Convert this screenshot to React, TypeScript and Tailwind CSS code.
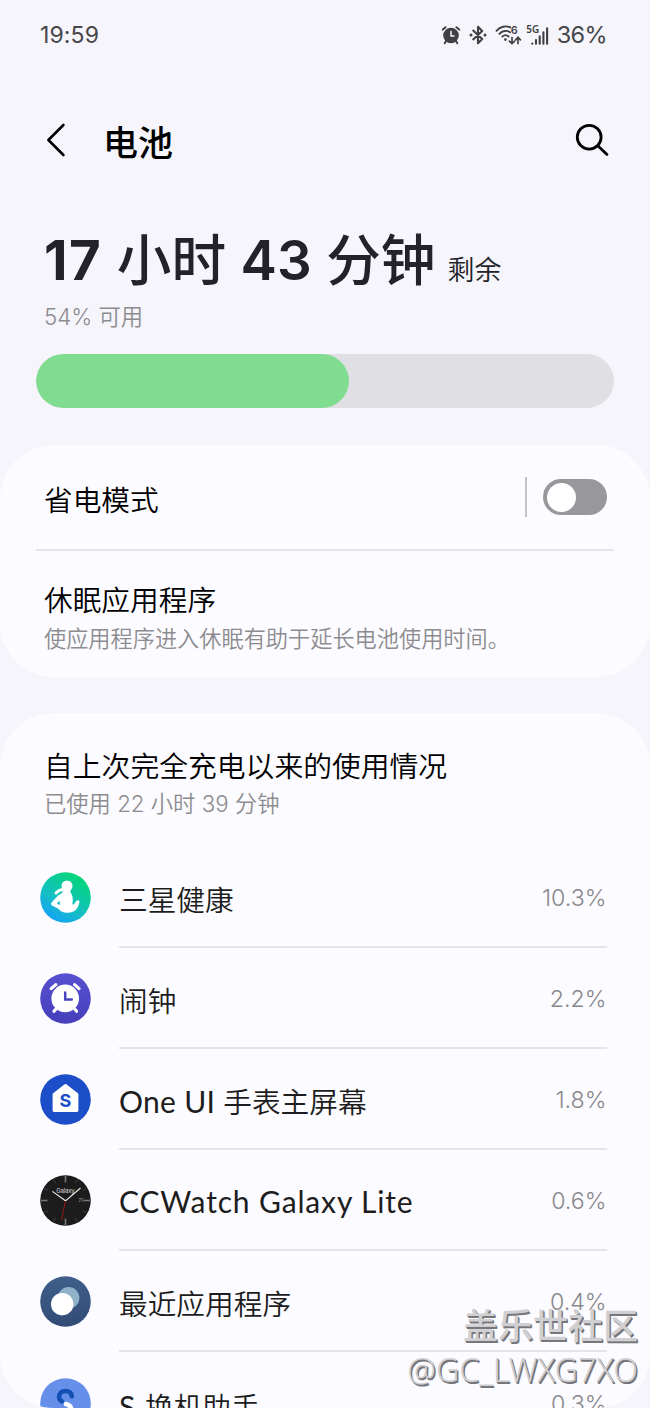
import type { ReactNode } from "react"
import { clsx } from "clsx"

interface AppUsage {
	// Latin part of the name, set slightly larger than the CJK part
	latin?: string
	latinClass?: string
	name?: string
	percent: string
	icon: ReactNode
}

function AlarmStatusIcon(): ReactNode {
	return (
		<svg width="20" height="20" viewBox="0 0 20 20" fill="none" stroke="#414144" strokeLinecap="round">
			<circle cx="10" cy="10.5" r="7.8" fill="#414144" stroke="none" />
			<path d="M1.8 4.6 4.6 2.2M18.2 4.6 15.4 2.2" strokeWidth="2" />
			<path d="M5.2 15.8 3.7 18.2M14.8 15.8 16.3 18.2" strokeWidth="2" />
			<path d="M10 6.6V11H13" stroke="#f6f5fb" strokeWidth="1.5" />
		</svg>
	)
}

function BluetoothIcon(): ReactNode {
	return (
		<svg width="18" height="20" viewBox="0 0 18 20" fill="none" stroke="#414144" strokeWidth="2.1" strokeLinejoin="round" strokeLinecap="round">
			<path d="M4.2 5.6 13.2 14 9 18.2V1.8L13.2 6 4.2 14.4" />
			<circle cx="2" cy="10" r="1.5" fill="#414144" stroke="none" />
			<circle cx="16" cy="10" r="1.5" fill="#414144" stroke="none" />
		</svg>
	)
}

function WifiIcon(): ReactNode {
	return (
		<svg width="27" height="22" viewBox="0 0 27 22" fill="none" stroke="#414144" strokeWidth="1.9" strokeLinecap="round">
			<path d="M1.5 6.8C5.2 2.4 11 1.4 15.2 3.4" />
			<path d="M4.4 9.8C7.3 6.6 11.8 6 15 8.2" />
			<path d="M7.3 12.6C9.2 10.9 11.8 10.9 13.6 12.4" />
			<circle cx="10.4" cy="15.6" r="1.4" fill="#414144" stroke="none" />
			<path d="M17 13.5V19.2M14.4 17.2 17 19.6 19.6 17.2M23 19.5V13.5M20.6 15.8 23 13.2 25.4 15.8" strokeWidth="1.7" />
			<text x="15.8" y="9.6" fill="#414144" stroke="none" fontFamily="Inter, sans-serif" fontWeight="600" fontSize="11">6</text>
		</svg>
	)
}

function SignalIcon(): ReactNode {
	return (
		<svg className="overflow-visible" width="25" height="22" viewBox="0 0 25 22" fill="none" stroke="#414144" strokeWidth="2.1" strokeLinecap="round">
			<text x="0.2" y="8.8" fill="#414144" stroke="none" fontFamily="'Noto Sans', sans-serif" fontWeight="600" fontSize="10">5G</text>
			<path d="M6.3 19.7V19.6M10 19.7V16M13.7 19.7V12.2M17.4 19.7V8.2M21.1 19.7V4.2" />
		</svg>
	)
}

function HealthIcon(): ReactNode {
	return (
		<svg width="51" height="51" viewBox="0 0 51 51">
			<defs>
				<linearGradient id="health" x1="0.15" y1="1" x2="0.7" y2="0.1">
					<stop offset="0" stopColor="#169bff" />
					<stop offset="0.45" stopColor="#14bfc6" />
					<stop offset="1" stopColor="#05d47e" />
				</linearGradient>
			</defs>
			<circle cx="25.5" cy="25.5" r="25.3" fill="url(#health)" />
			<circle cx="27" cy="14" r="5.5" fill="#fff" />
			<path d="M22.4 17.6Q18.6 18 16 21" stroke="#fff" strokeWidth="3" strokeLinecap="round" fill="none" />
			<path
				fill="#fff"
				fillRule="evenodd"
				d="M23.4 17.5 30.4 17.5C30 20 31 21 31.8 22.6 33 25 33 28 32.4 32.6 34 32.6 34.8 31.4 36 29.2 37 27.6 40 28.2 39.4 30.4 37.6 37.4 34.4 40.4 28 40.8 23.6 41 20.6 40 18.4 36.8L12 33.4C10.8 32.6 10.8 31.4 11.6 30.4L17.6 24C20 22 23 21.6 23.4 17.5ZM19.2 29 17 31.2 19.6 33.2C20.2 31.6 20 30.2 19.2 29Z"
			/>
		</svg>
	)
}

function ClockIcon(): ReactNode {
	return (
		<svg width="51" height="51" viewBox="0 0 51 51" fill="none" strokeLinecap="round">
			<defs>
				<linearGradient id="clock" x1="0" y1="0" x2="0" y2="1">
					<stop offset="0" stopColor="#5751d0" />
					<stop offset="1" stopColor="#453fbc" />
				</linearGradient>
			</defs>
			<circle cx="25.5" cy="25.5" r="25.3" fill="url(#clock)" />
			<path d="M11.2 15.6 15.8 11.6M39 15.6 34.6 11.6M16 36 14 38.2M34.6 36 36.6 38.2" stroke="#fff" strokeWidth="3.2" />
			<circle cx="25.2" cy="25.4" r="13.8" fill="#fff" />
			<path d="M25.2 19.4V26.4H31.8" stroke="#4b45c3" strokeWidth="2.5" />
		</svg>
	)
}

function HomeIcon(): ReactNode {
	return (
		<svg width="51" height="51" viewBox="0 0 51 51">
			<circle cx="25.5" cy="25.5" r="25.3" fill="#1c4ec9" />
			<path d="M25.5 11.4 37 20.4V36.6H14V20.4Z" fill="#fff" stroke="#fff" strokeWidth="2.8" strokeLinejoin="round" />
			<text x="25.3" y="33.2" textAnchor="middle" fill="#1c4ec9" fontFamily="Inter, sans-serif" fontWeight="700" fontSize="18">S</text>
		</svg>
	)
}

function WatchIcon(): ReactNode {
	return (
		<svg width="51" height="51" viewBox="0 0 51 51" fill="none">
			<circle cx="25.5" cy="25.5" r="25.3" fill="#1c1c1d" />
			<path d="M25.5 1V7.5M25.5 43.5V50M1 25.5H7.5M43.5 25.5H50" stroke="#77777a" strokeWidth="1.6" />
			<path d="M13.3 4.4 15.5 8.2M37.7 4.4 35.5 8.2M4.4 13.3 8.2 15.5M46.6 13.3 42.8 15.5M4.4 37.7 8.2 35.5M46.6 37.7 42.8 35.5M13.3 46.6 15.5 42.8M37.7 46.6 35.5 42.8" stroke="#4a4a4d" strokeWidth="0.8" />
			<text x="25.4" y="18.4" textAnchor="middle" fill="#d8d8d8" fontFamily="Inter, sans-serif" fontSize="6" textLength="18.5">Galaxy</text>
			<text x="38.6" y="27.4" fill="#a0a0a0" fontFamily="Inter, sans-serif" fontSize="4.5">21</text>
			<path d="M25.5 25.8 12.4 16.4M25.5 25.8 40.5 13" stroke="#f2f2f2" strokeWidth="1.1" />
			<path d="M25.5 26 21.5 45" stroke="#9c1717" strokeWidth="1" />
		</svg>
	)
}

function RecentsIcon(): ReactNode {
	return (
		<svg width="51" height="51" viewBox="0 0 51 51">
			<defs>
				<linearGradient id="recents" x1="0" y1="0" x2="0" y2="1">
					<stop offset="0" stopColor="#3f5f8a" />
					<stop offset="1" stopColor="#324b76" />
				</linearGradient>
			</defs>
			<circle cx="25.5" cy="25.5" r="25.3" fill="url(#recents)" />
			<circle cx="28.6" cy="21.8" r="10.8" fill="#8fb2c8" />
			<circle cx="22.2" cy="28.2" r="11.2" fill="#fff" />
		</svg>
	)
}

function SwitchIcon(): ReactNode {
	return (
		<svg width="51" height="51" viewBox="0 0 51 51" fill="none" strokeWidth="4.6" strokeLinecap="round">
			<circle cx="25.5" cy="25.5" r="25.3" fill="#658fe9" />
			<path d="M26 26C33 28 34 38 25.5 38.5 21 38.5 19 36.5 18 33" stroke="#fff" />
			<path d="M31.8 18.2C31.4 14.6 28.6 12.8 25.4 13 18.4 13.4 17.2 20.6 22 23.4" stroke="#1450b4" />
		</svg>
	)
}

const apps: AppUsage[] = [
	{ name: "三星健康", percent: "10.3%", icon: <HealthIcon /> },
	{ name: "闹钟", percent: "2.2%", icon: <ClockIcon /> },
	{ latin: "One UI ", latinClass: "tracking-[0.3px]", name: "手表主屏幕", percent: "1.8%", icon: <HomeIcon /> },
	{ latin: "CCWatch Galaxy Lite", latinClass: "tracking-[0.85px]", percent: "0.6%", icon: <WatchIcon /> },
	{ name: "最近应用程序", percent: "0.4%", icon: <RecentsIcon /> },
	{ latin: "S ", latinClass: "tracking-[1px]", name: "换机助手", percent: "0.3%", icon: <SwitchIcon /> },
]

function StatusBar(): ReactNode {
	return (
		<header className="flex h-[70px] items-center justify-between pr-[43px] pl-10 text-[#47474a]">
			<span className="font-[Inter,sans-serif] text-[23px] tracking-[0.1px]">19:59</span>
			<div className="flex items-center">
				<AlarmStatusIcon />
				<span className="ml-2 flex"><BluetoothIcon /></span>
				<span className="ml-2 flex"><WifiIcon /></span>
				<span className="ml-1 flex"><SignalIcon /></span>
				<span className="ml-1.5 font-[Inter,sans-serif] text-[23.5px] tracking-[-0.6px]">36%</span>
			</div>
		</header>
	)
}

function AppRow({ app, last }: { app: AppUsage, last: boolean }): ReactNode {
	return (
		<li className="flex h-[101.1px] shrink-0 pr-[43.5px] pl-[39.5px]">
			<div className="mr-[28.5px] flex w-[51px] items-center">{app.icon}</div>
			<div className={clsx("flex flex-1 items-center justify-between", !last && "border-b-2 border-[#e5e5e9]")}>
				<span className={clsx("text-[28.7px] leading-10 font-[350] whitespace-pre text-[#1d1d20]", app.name ? "pt-1.5" : "pt-1")}>
					{app.latin && <span className={clsx("text-[30px] font-normal", app.latinClass)}>{app.latin}</span>}
					{app.name}
				</span>
				<span className="pt-[3px] font-[Inter,sans-serif] text-[23.2px] font-[350] text-[#88888c]">{app.percent}</span>
			</div>
		</li>
	)
}

export default function App(): ReactNode {
	return (
		<main className="relative flex h-[1408px] w-[650px] flex-col overflow-hidden bg-[#f6f5fb] font-[Lato,'Noto_Sans_CJK_SC',sans-serif] text-black">
			<StatusBar />

			<nav className="flex h-[140px] items-center pr-[41px] pl-[46px]">
				<svg width="20" height="34" viewBox="0 0 20 34" fill="none" stroke="#000" strokeWidth="2.6" strokeLinecap="round" strokeLinejoin="round">
					<path d="M17.4 2 2.4 17 17.4 32" />
				</svg>
				<h1 className="mt-1 ml-[37px] flex-1 text-[35px] leading-10 font-medium">电池</h1>
				<svg width="34" height="34" viewBox="0 0 34 34" fill="none" stroke="#000" strokeWidth="2.8" strokeLinecap="round">
					<circle cx="14.2" cy="14.2" r="11.9" />
					<path d="M22.8 22.8 32 31.4" />
				</svg>
			</nav>

			<section className="h-[235px] px-9">
				<div className="flex h-[88px] items-baseline pt-1.5 pl-2 leading-[88px] whitespace-nowrap text-[#222228]">
					<p className="font-[Inter,'Noto_Sans_CJK_SC',sans-serif] text-[54.6px] font-medium">
						<span className="font-bold tracking-[1.5px]">17</span> 小时 <span className="font-semibold">43</span> 分钟
					</p>
					<span className="ml-3 text-[27px] font-[350]">剩余</span>
				</div>
				<p className="h-14 pl-2 font-[Inter,'Noto_Sans_CJK_SC',sans-serif] text-[22.3px] leading-[38px] font-[350] text-[#8c8c90]">54% 可用</p>
				<div className="h-[54px] overflow-hidden rounded-full bg-[#e0dfe4]">
					<div className="h-full w-[313px] rounded-full bg-[#80dc8f]" />
				</div>
			</section>

			<section className="h-[232px] rounded-[54px] bg-[#fcfbff] px-9">
				<div className="flex h-[106px] items-center border-b-2 border-[#e5e5e9] pr-[7px] pl-2">
					<span className="flex-1 pt-[7px] text-[28.7px] font-[350]">省电模式</span>
					<div className="h-10 w-0.5 bg-[#c3c3c7]" />
					<div className="ml-4 flex h-9 w-16 items-center rounded-full bg-[#98979c] px-1">
						<div className="size-[29px] rounded-full bg-white" />
					</div>
				</div>
				<div className="pt-7 pl-2">
					<p className="text-[28.7px] leading-[42px] font-[350]">休眠应用程序</p>
					<p className="text-[22.2px] leading-9 font-[350] text-[#8c8c90]">使应用程序进入休眠有助于延长电池使用时间。</p>
				</div>
			</section>

			<section className="mt-9 flex h-[695px] flex-col overflow-hidden rounded-[54px] bg-[#fcfbff]">
				<div className="h-[134px] shrink-0 pt-8 pl-11">
					<h2 className="text-[28.8px] leading-[42px] font-[350]">自上次完全充电以来的使用情况</h2>
					<p className="-mt-px font-[Inter,'Noto_Sans_CJK_SC',sans-serif] text-[22.3px] leading-9 font-[350] text-[#8c8c90]">已使用 22 小时 39 分钟</p>
				</div>
				<ul>
					{apps.map((app, index): ReactNode => (
						<AppRow key={app.percent} app={app} last={index === apps.length - 1} />
					))}
				</ul>
			</section>

			<div className="absolute right-3 bottom-4 text-right whitespace-nowrap text-[#d0d0d2] [text-shadow:1px_1px_0_#77777b,1.5px_1.5px_0_#77777b]">
				<p className="text-[35px] leading-[46px] font-medium">盖乐世社区</p>
				<p className="font-['Noto_Sans',sans-serif] text-[32.2px] leading-[44px] font-light">@GC_LWXG7XO</p>
			</div>
		</main>
	)
}
